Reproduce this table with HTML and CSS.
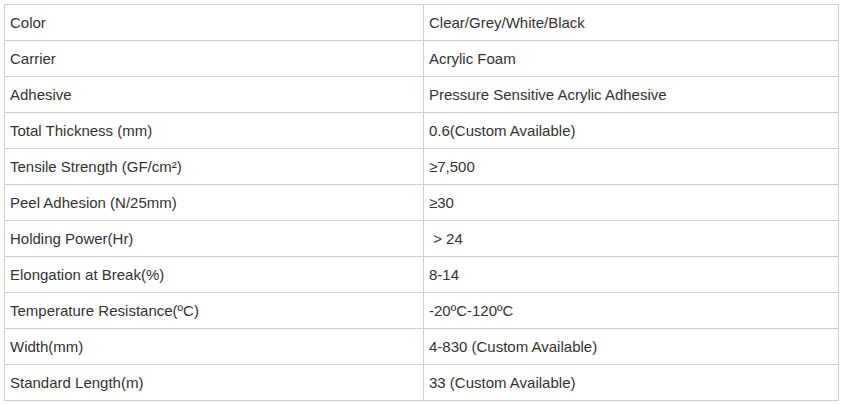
FILE: index.html
```html
<!DOCTYPE html>
<html>
<head>
<meta charset="utf-8">
<link rel="stylesheet" href="styles.css">
</head>
<body>
<table class="spec">
<tr><td>Color</td><td>Clear/Grey/White/Black</td></tr>
<tr><td>Carrier</td><td>Acrylic Foam</td></tr>
<tr><td>Adhesive</td><td>Pressure Sensitive Acrylic Adhesive</td></tr>
<tr><td>Total Thickness (mm)</td><td>0.6(Custom Available)</td></tr>
<tr><td>Tensile Strength (GF/cm²)</td><td>≥7,500</td></tr>
<tr><td>Peel Adhesion (N/25mm)</td><td>≥30</td></tr>
<tr><td>Holding Power(Hr)</td><td>&nbsp;&gt; 24</td></tr>
<tr><td>Elongation at Break(%)</td><td>8-14</td></tr>
<tr><td>Temperature Resistance(ºC)</td><td>-20ºC-120ºC</td></tr>
<tr><td>Width(mm)</td><td>4-830 (Custom Available)</td></tr>
<tr><td>Standard Length(m)</td><td>33 (Custom Available)</td></tr>
</table>
</body>
</html>
```
FILE: styles.css
```css
html, body {
  margin: 0;
  padding: 0;
  background: #fff;
}
body {
  padding: 4px;
  font-family: "Liberation Sans", Arial, sans-serif;
  font-size: 15px;
  color: #333;
}
.spec {
  border-collapse: collapse;
  width: 835px;
  table-layout: fixed;
}
.spec td {
  border: 1px solid #cfcfcf;
  height: 36px;
  padding: 0 5px;
  vertical-align: middle;
  box-sizing: border-box;
}
.spec td:first-child {
  width: 419px;
}
```
